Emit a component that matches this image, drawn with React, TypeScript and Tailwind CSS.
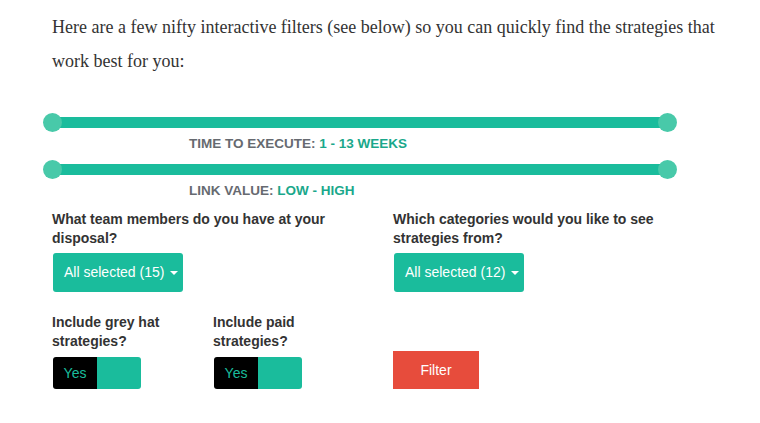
const Slider = ({ label, value }: { label: string; value: string }) => {
  return (
    <div>
      <div className="relative h-[19px] w-[634px] ml-[-9px]">
        <div className="absolute left-[9px] right-[9px] top-[4px] h-[11px] bg-[#1abc9c]" />
        <div className="absolute left-0 top-0 h-[19px] w-[19px] rounded-full bg-[#48c9a9]" />
        <div className="absolute right-0 top-0 h-[19px] w-[19px] rounded-full bg-[#48c9a9]" />
      </div>
      <p className="ml-[137px] mt-[4px] text-[13.5px] font-bold leading-[16px] text-[#666a70]">
        {label} <span className="text-[#1aa88b]">{value}</span>
      </p>
    </div>
  );
};

const Dropdown = ({ count }: { count: number }) => (
  <button className="ml-px mt-[5px] flex h-[39px] w-[130px] items-center rounded-[3px] bg-[#1abc9c] pl-[11px] text-[14px] text-white">
    All selected ({count})
    <span className="ml-[6px] mt-[1px] inline-block h-0 w-0 border-x-[4px] border-t-[4px] border-x-transparent border-t-white" />
  </button>
);

const Toggle = () => (
  <div className="ml-px mt-[6px] flex h-[32px] w-[88px] overflow-hidden rounded-[3px]">
    <div className="flex w-[44px] items-center justify-center bg-black text-[14px] text-[#1abc9c]">Yes</div>
    <div className="flex-1 bg-[#1abc9c]" />
  </div>
);

export default function App() {
  return (
    <div className="h-[423px] w-[760px] bg-white pl-[52px] pt-[10px] font-['Liberation_Sans',Arial,sans-serif]">
      <p className="w-[680px] font-['Liberation_Serif',Georgia,serif] text-[18px] leading-[34px] text-[#333]">
        Here are a few nifty interactive filters (see below) so you can quickly find the strategies that work best for you:
      </p>

      <div className="mt-[35px] flex flex-col gap-[8px]">
        <Slider label="TIME TO EXECUTE:" value="1 - 13 WEEKS" />
        <Slider label="LINK VALUE:" value="LOW - HIGH" />
      </div>

      <div className="mt-[11px] grid grid-cols-[326px_326px] gap-x-[15px]">
        <div>
          <p className="text-[14px] font-bold leading-[19px] text-[#333]">
            What team members do you have at your disposal?
          </p>
          <Dropdown count={15} />
        </div>
        <div>
          <p className="text-[14px] font-bold leading-[19px] text-[#333]">
            Which categories would you like to see strategies from?
          </p>
          <Dropdown count={12} />
        </div>

        <div className="mt-[21px] grid grid-cols-[161px_1fr]">
          <div>
            <p className="text-[14px] font-bold leading-[19px] text-[#333]">
              Include grey hat
              <br />
              strategies?
            </p>
            <Toggle />
          </div>
          <div>
            <p className="text-[14px] font-bold leading-[19px] text-[#333]">
              Include paid
              <br />
              strategies?
            </p>
            <Toggle />
          </div>
        </div>
        <div className="mt-[59px]">
          <button className="h-[38px] w-[86px] bg-[#e74c3c] text-[14px] text-white">Filter</button>
        </div>
      </div>
    </div>
  );
}
